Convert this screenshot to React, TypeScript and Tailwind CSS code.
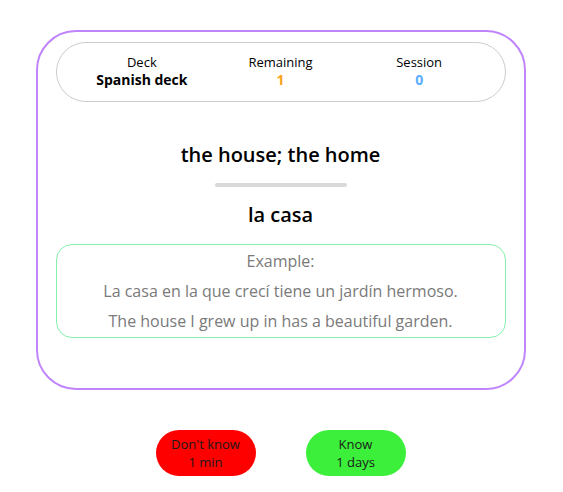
import React from 'react'

const App = () => {
  return (
    <div className="min-h-screen bg-white pt-[30px]" style={{ fontFamily: '"Open Sans", sans-serif' }}>
      <div className="mx-auto w-[490px] -translate-x-[1px] rounded-[40px] border-2 border-[#c084fc] px-[18px] pt-[10px] pb-[50px]">
        <div className="grid grid-cols-3 rounded-full border border-[#cccccc] px-4 pt-[10px] pb-[12px] text-center leading-[18px] text-black">
          <div>
            <div className="text-[13px] font-medium">Deck</div>
            <div className="text-[14px] font-bold">Spanish deck</div>
          </div>
          <div>
            <div className="text-[13px] font-medium">Remaining</div>
            <div className="text-[14px] font-bold text-[#ffa31a]">1</div>
          </div>
          <div>
            <div className="text-[13px] font-medium">Session</div>
            <div className="text-[14px] font-bold text-[#5aaeff]">0</div>
          </div>
        </div>

        <div className="mt-[39px] text-center text-[20px] font-semibold leading-[28px] text-black">
          the house; the home
        </div>
        <div className="mx-auto mt-[14px] h-[4px] w-[132px] rounded-full bg-[#d9d9d9]" />
        <div className="mt-[14px] text-center text-[20px] font-semibold leading-[28px] text-black">
          la casa
        </div>

        <div className="mt-[15px] rounded-[16px] border border-[#86efac] py-[1px] text-center text-[16px] leading-[30px] text-[#7a7a7a]">
          <div>Example:</div>
          <div>La casa en la que crecí tiene un jardín hermoso.</div>
          <div>The house I grew up in has a beautiful garden.</div>
        </div>
      </div>

      <div className="mt-[40px] flex -translate-x-[1px] justify-center gap-[50px]">
        <button className="h-[46px] w-[100px] rounded-full bg-[#ff0000] text-[13px] leading-[18px] text-[#1a1a1a]">
          <div>Don't know</div>
          <div>1 min</div>
        </button>
        <button className="h-[46px] w-[100px] rounded-full bg-[#3bef3b] text-[13px] leading-[18px] text-[#1a1a1a]">
          <div>Know</div>
          <div>1 days</div>
        </button>
      </div>
    </div>
  )
}

export default App
